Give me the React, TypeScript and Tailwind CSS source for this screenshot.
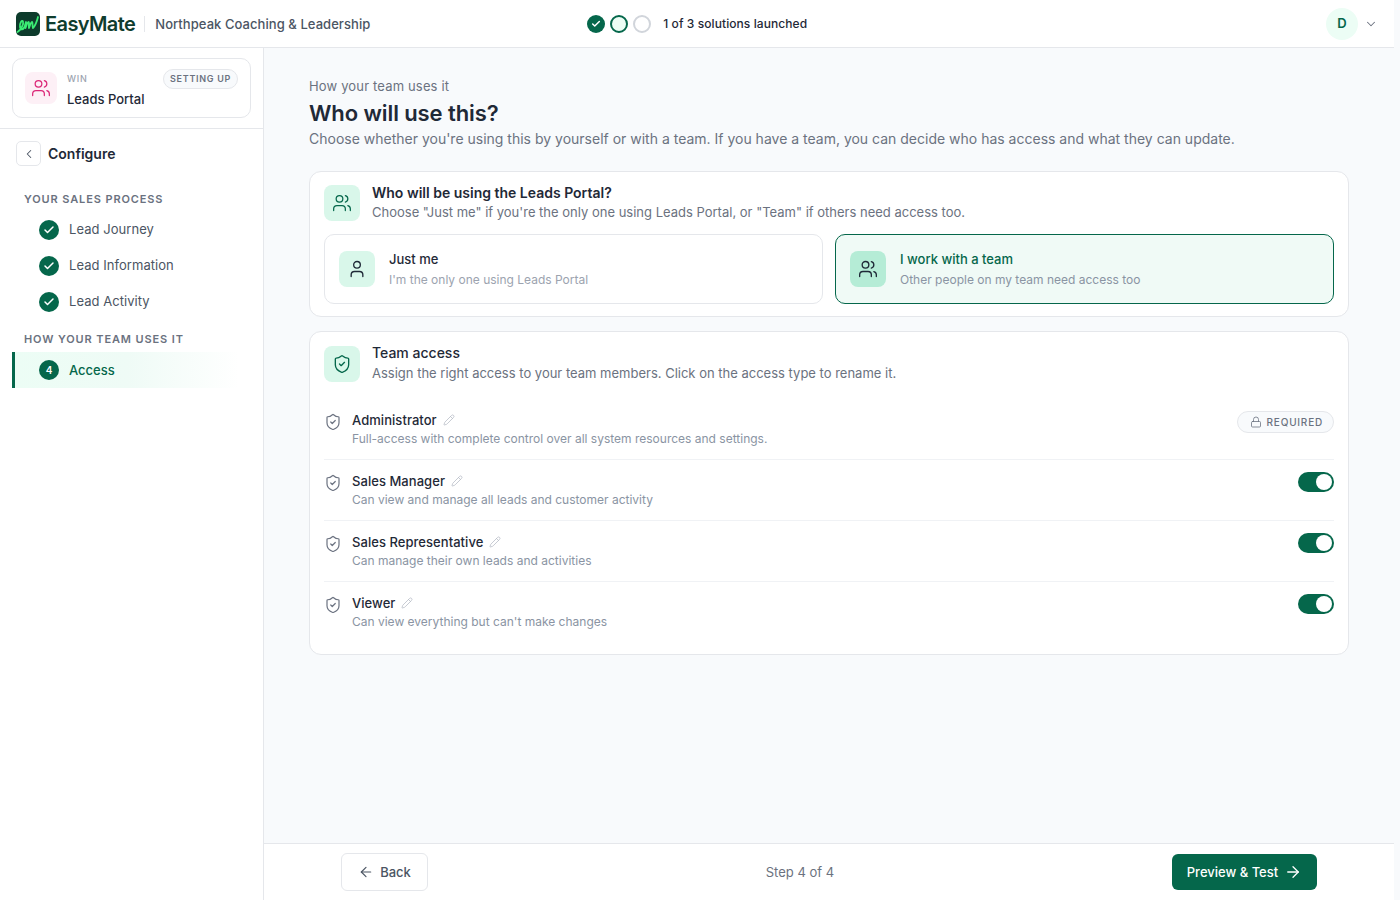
import { ArrowLeft, ArrowRight, Check, ChevronDown, ChevronLeft, Lock, Pencil, ShieldCheck, User, Users } from 'lucide-react';

const processSteps = ['Lead Journey', 'Lead Information', 'Lead Activity'];

const roles = [
  { name: 'Sales Manager', desc: 'Can view and manage all leads and customer activity' },
  { name: 'Sales Representative', desc: 'Can manage their own leads and activities' },
  { name: 'Viewer', desc: "Can view everything but can't make changes" },
];

function Logo() {
  return (
    <div className="flex items-center gap-[5px]">
      <svg width="24" height="24" viewBox="0 0 24 24" className="shrink-0">
        <rect width="24" height="24" rx="5" fill="#0d3b2c" />
        <path
          d="M1.500 20C5 18 8 12 7 9.500C6 7.500 3.500 11 4 15C4.500 18 7 18 8.500 15L10 10L9.500 16C10.500 13 11.500 10 12.500 10C13.500 10 12.500 14 13 16C14 13 15 10 16 10C17 10 16 14 17 16C19 14 21 9 22 5"
          fill="none"
          stroke="#3bec74"
          strokeWidth="1.800"
          strokeLinecap="round"
          strokeLinejoin="round"
        />
      </svg>
      <span className="text-[20px] leading-6 font-semibold tracking-[-0.6px] text-[#0f3d2e]">EasyMate</span>
    </div>
  );
}

function Toggle() {
  return (
    <div className="flex h-5 w-9 items-center justify-end rounded-full bg-[#05674b] px-[2px]">
      <div className="h-4 w-4 rounded-full bg-white" />
    </div>
  );
}

function RoleRow({ name, desc, right, last }: { name: string; desc: string; right: React.ReactNode; last?: boolean }) {
  return (
    <div className={`flex h-[61px] items-start justify-between pt-[12px] ${last ? '' : 'border-b border-[#f0f2f5]'}`}>
      <div className="flex items-start gap-[10px]">
        <ShieldCheck className="mt-[2px] h-[18px] w-[18px] text-[#6b7280]" strokeWidth={1.6} />
        <div>
          <div className="flex items-center gap-[6px]">
            <span className="text-[13px] leading-[18px] font-medium tracking-[0.05px] text-[#1f2937]">{name}</span>
            <Pencil className="h-[12px] w-[12px] text-[#b4bac4]" strokeWidth={1.5} />
          </div>
          <div className="mt-[1px] text-[12px] leading-[18px] text-[#8a94a3]">{desc}</div>
        </div>
      </div>
      <div>{right}</div>
    </div>
  );
}

export default function App() {
  return (
    <div className="flex h-screen flex-col overflow-hidden bg-[#f8fafc] text-[#1f2937] font-['Inter',sans-serif]">
      <header className="mr-[6px] flex h-[48px] shrink-0 items-center border-b border-[#e5e7eb] bg-white pl-[16px] pr-[16px]">
        <Logo />
        <div className="ml-[9px] mr-[10px] h-4 w-px bg-[#e5e7eb]" />
        <span className="mt-[2px] w-[215px] whitespace-nowrap text-[13px] font-medium tracking-[0.06px] text-[#4b5563]">Northpeak Coaching &amp; Leadership</span>
        <div className="ml-[217px] flex items-center gap-[5px]">
          <div className="flex h-[18px] w-[18px] items-center justify-center rounded-full bg-[#05674b]">
            <Check className="h-[10px] w-[10px] text-white" strokeWidth={3.5} />
          </div>
          <div className="h-[18px] w-[18px] rounded-full border-2 border-[#05674b] bg-[#ecfdf5]" />
          <div className="h-[18px] w-[18px] rounded-full border-2 border-[#d1d5db] bg-white" />
          <span className="ml-[7px] whitespace-nowrap text-[12px] font-medium tracking-[0.08px] text-[#1f2937]">1 of 3 solutions launched</span>
        </div>
        <div className="ml-auto flex items-center gap-[6px]">
          <div className="flex h-8 w-8 items-center justify-center rounded-full bg-[#ecfdf5] text-[13px] font-semibold text-[#05674b]">D</div>
          <ChevronDown className="h-[14px] w-[14px] text-[#6b7280]" strokeWidth={1.75} />
        </div>
      </header>

      <div className="flex min-h-0 flex-1">
        <aside className="flex w-[264px] shrink-0 flex-col border-r border-[#e5e7eb] bg-white">
          <div className="border-b border-[#e5e7eb] px-[12px] pb-[10px] pt-[10px]">
            <div className="flex h-[60px] items-start rounded-[10px] border border-[#e5e7eb] bg-white pl-[12px] pr-[12px]">
              <div className="mt-[13px] flex h-8 w-8 items-center justify-center rounded-lg bg-[#fdf0f6]">
                <Users className="h-5 w-5 text-[#db2777]" strokeWidth={1.5} />
              </div>
              <div className="ml-[10px] mt-[13px]">
                <div className="text-[9px] leading-[14px] font-medium tracking-[0.7px] text-[#9ca3af]">WIN</div>
                <div className="mt-[4px] text-[13px] leading-[18px] font-medium text-[#1f2937]">Leads Portal</div>
              </div>
              <div className="ml-auto mt-[10px] flex h-[20px] items-center rounded-full border border-[#e5e7eb] bg-[#f8fafc] px-[6px] text-[9px] font-semibold tracking-[0.7px] text-[#6b7280]">
                SETTING UP
              </div>
            </div>
          </div>

          <div className="flex items-center gap-[7px] pl-[16px] pt-[12px]">
            <div className="flex h-[25px] w-[25px] items-center justify-center rounded-[5px] border border-[#e5e7eb] bg-white">
              <ChevronLeft className="h-[14px] w-[14px] text-[#4b5563]" strokeWidth={1.75} />
            </div>
            <span className="text-[14px] font-semibold text-[#1f2937]">Configure</span>
          </div>

          <div className="pl-[24px] pt-[25px] text-[11px] leading-[16px] font-semibold tracking-[0.88px] text-[#6b7280]">YOUR SALES PROCESS</div>
          <div className="mt-[5px] flex flex-col">
            {processSteps.map((s) => (
              <div key={s} className="flex h-[36px] items-center gap-[10px] pl-[39px]">
                <div className="flex h-5 w-5 items-center justify-center rounded-full bg-[#05674b]">
                  <Check className="h-3 w-3 text-white" strokeWidth={3} />
                </div>
                <span className="text-[13px] tracking-[0.05px] text-[#4b5563]">{s}</span>
              </div>
            ))}
          </div>
          <div className="pl-[24px] pt-[11px] text-[11px] leading-[16px] font-semibold tracking-[0.88px] text-[#6b7280]">HOW YOUR TEAM USES IT</div>
          <div className="ml-[12px] mt-[5px] mr-[24px] flex h-[36px] items-center gap-[10px] border-l-[3px] border-[#05674b] bg-gradient-to-r from-[#ecfdf5] via-[#effbf6] to-transparent pl-[24px]">
            <div className="flex h-5 w-5 items-center justify-center rounded-full bg-[#05674b] text-[10px] font-semibold text-white">4</div>
            <span className="mt-[2px] text-[13px] font-medium text-[#05674b]">Access</span>
          </div>
        </aside>

        <div className="flex min-w-0 flex-1 flex-col">
          <main className="min-h-0 flex-1 pl-[45px] pr-[51px] pt-[28px]">
            <div className="text-[13px] leading-[20px] tracking-[0.16px] text-[#6b7280]">How your team uses it</div>
            <h1 className="mt-[2px] text-[22px] leading-[30px] font-semibold tracking-[-0.1px] text-[#1f2937]">Who will use this?</h1>
            <p className="mt-[1px] text-[14px] leading-[20px] text-[#6b7280]">
              Choose whether you're using this by yourself or with a team. If you have a team, you can decide who has access and what they can update.
            </p>

            <section className="mt-[22px] rounded-[12px] border border-[#e5e7eb] bg-white px-[14px] pb-[12px] pt-[13px]">
              <div className="flex items-start gap-[12px]">
                <div className="flex h-9 w-9 items-center justify-center rounded-lg bg-[#d9f7ea]">
                  <Users className="h-5 w-5 text-[#05674b]" strokeWidth={1.5} />
                </div>
                <div>
                  <div className="text-[14px] leading-[15px] font-semibold text-[#1f2937]">Who will be using the Leads Portal?</div>
                  <div className="mt-[3px] text-[13px] leading-[19px] text-[#6b7280]">Choose "Just me" if you're the only one using Leads Portal, or "Team" if others need access too.</div>
                </div>
              </div>
              <div className="mt-[12px] grid grid-cols-2 gap-[12px]">
                <div className="flex h-[70px] items-center gap-[14px] rounded-[10px] border border-[#e5e7eb] bg-white pl-[14px]">
                  <div className="flex h-9 w-9 items-center justify-center rounded-lg bg-[#d9f7ea]">
                    <User className="h-5 w-5 text-[#1f2937]" strokeWidth={1.6} />
                  </div>
                  <div>
                    <div className="text-[13px] leading-[20px] font-medium text-[#1f2937]">Just me</div>
                    <div className="mt-[2px] text-[12px] leading-[18px] text-[#9ca3af]">I'm the only one using Leads Portal</div>
                  </div>
                </div>
                <div className="flex h-[70px] items-center gap-[14px] rounded-[10px] border border-[#05674b] bg-[#f0faf6] pl-[14px]">
                  <div className="flex h-9 w-9 items-center justify-center rounded-lg bg-[#b5ecd6]">
                    <Users className="h-5 w-5 text-[#1f2937]" strokeWidth={1.6} />
                  </div>
                  <div>
                    <div className="text-[13px] leading-[20px] font-medium text-[#05674b]">I work with a team</div>
                    <div className="mt-[2px] text-[12px] leading-[18px] text-[#8a94a3]">Other people on my team need access too</div>
                  </div>
                </div>
              </div>
            </section>

            <section className="mt-[14px] rounded-[12px] border border-[#e5e7eb] bg-white px-[14px] pb-[11px] pt-[14px]">
              <div className="flex items-start gap-[12px]">
                <div className="flex h-9 w-9 items-center justify-center rounded-lg bg-[#d9f7ea]">
                  <ShieldCheck className="h-5 w-5 text-[#05674b]" strokeWidth={1.6} />
                </div>
                <div>
                  <div className="text-[14px] leading-[14px] font-medium text-[#1f2937]">Team access</div>
                  <div className="mt-[4px] text-[13px] leading-[19px] text-[#6b7280]">Assign the right access to your team members. Click on the access type to rename it.</div>
                </div>
              </div>
              <div className="mt-[16px]">
                <RoleRow
                  name="Administrator"
                  desc="Full-access with complete control over all system resources and settings."
                  right={
                    <div className="flex h-[22px] items-center gap-[5px] rounded-full border border-[#e5e7eb] bg-[#f8fafc] pl-[12px] pr-[10px] text-[10px] font-medium tracking-[0.8px] text-[#6b7280]">
                      <Lock className="h-[12px] w-[12px]" strokeWidth={1.6} />
                      REQUIRED
                    </div>
                  }
                />
                {roles.map((r, i) => (
                  <RoleRow key={r.name} name={r.name} desc={r.desc} right={<Toggle />} last={i === roles.length - 1} />
                ))}
              </div>
            </section>
          </main>

          <footer className="mr-[6px] h-[57px] shrink-0 border-t border-[#e5e7eb] bg-white">
            <div className="mx-auto flex h-full w-[976px] items-center justify-between">
              <button className="flex h-[38px] w-[87px] items-center justify-center gap-[6px] rounded-[6px] border border-[#e5e7eb] bg-white text-[13px] font-medium text-[#4b5563]">
                <ArrowLeft className="h-4 w-4" strokeWidth={1.75} />
                <span className="mt-[1px]">Back</span>
              </button>
              <span className="mt-[2px] text-[13px] tracking-[0.02px] text-[#6b7280]">Step 4 of 4</span>
              <button className="flex h-[36px] w-[145px] items-center justify-center gap-[6px] rounded-[6px] bg-[#05674b] text-[13px] font-medium text-white">
                <span className="mt-[1px]">Preview &amp; Test</span>
                <ArrowRight className="h-[18px] w-[18px]" strokeWidth={1.75} />
              </button>
            </div>
          </footer>
        </div>
      </div>
    </div>
  );
}
